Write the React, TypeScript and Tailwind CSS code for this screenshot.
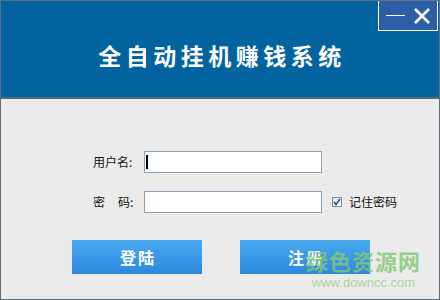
import { useState } from "react";

const cjk = "font-['SimSun','Noto_Sans_CJK_SC',sans-serif]";

export default function App() {
  const [remember, setRemember] = useState(true);

  return (
    <div className={`relative flex h-[300px] w-[440px] flex-col overflow-hidden border border-[#5d6f80] bg-[#ebebeb] ${cjk}`}>
      <header className="relative flex h-[98px] shrink-0 items-center justify-center border-b-2 border-[#56697a] bg-[#02639f]">
        <h1 className="mt-[12px] pl-[4px] text-[23px] font-bold tracking-[4.5px] text-white">
          全自动挂机赚钱系统
        </h1>
        <div className="absolute right-[1px] top-[-1px] flex h-[31px] w-[60px] items-center justify-between border border-white bg-[#2b5ea6] pl-[4px] pr-[3px]">
          <button className="flex h-[24px] w-[24px] items-center justify-center" aria-label="最小化">
            <span className="block h-[1.5px] w-[19px] bg-white" />
          </button>
          <button className="flex h-[24px] w-[24px] items-center justify-center" aria-label="关闭">
            <svg width="18" height="18" viewBox="0 0 18 18">
              <path d="M2 2L16 16M16 2L2 16" stroke="white" strokeWidth="2.6" />
            </svg>
          </button>
        </div>
      </header>

      <main className="flex flex-1 flex-col pt-[52px]">
        <div className="flex items-center pl-[92px]">
          <label className="w-[51px] text-[12px] text-[#111]">用户名:</label>
          <div className="flex h-[22px] w-[178px] items-center border border-[#8ea3b8] bg-white pl-[1px]">
            <span className="block h-[14px] w-[2px] bg-black" />
          </div>
        </div>
        <div className="mt-[18px] flex items-center pl-[92px]">
          <label className="w-[51px] text-[12px] text-[#111]">
            密<span className="ml-[13px]">码:</span>
          </label>
          <div className="h-[22px] w-[178px] border border-[#8ea3b8] bg-white" />
          <label className="ml-[10px] flex items-center gap-[7px] text-[12px] text-[#111]">
            <span
              onClick={() => setRemember(!remember)}
              className="flex h-[10px] w-[10px] items-center justify-center border border-[#7d8a99] bg-gradient-to-br from-[#dcdcdc] to-white"
            >
              {remember && (
                <svg width="8" height="8" viewBox="0 0 8 8">
                  <path d="M1 4L3 6.5L7 1" stroke="#2d4f9b" strokeWidth="1.6" fill="none" />
                </svg>
              )}
            </span>
            记住密码
          </label>
        </div>

        <div className="mt-[27px] flex pl-[71px]">
          <button className="h-[34px] w-[130px] bg-gradient-to-b from-[#4aaaf0] to-[#2d88de] pl-[2px] text-[16px] font-bold tracking-[2px] text-white">
            登陆
          </button>
          <button className="ml-[38px] h-[34px] w-[130px] bg-gradient-to-b from-[#4aaaf0] to-[#2d88de] pl-[2px] text-[16px] font-bold tracking-[2px] text-white">
            注册
          </button>
        </div>
      </main>

      <div className="pointer-events-none absolute left-[305px] top-[248px] flex flex-col items-center opacity-80">
        <span className="text-[22px] font-bold leading-none tracking-[1px] text-[#84c874]">绿色资源网</span>
        <span className="mt-[5px] font-['Liberation_Sans',sans-serif] text-[13px] leading-none text-[#9ad28c]">www.downcc.com</span>
      </div>
    </div>
  );
}
